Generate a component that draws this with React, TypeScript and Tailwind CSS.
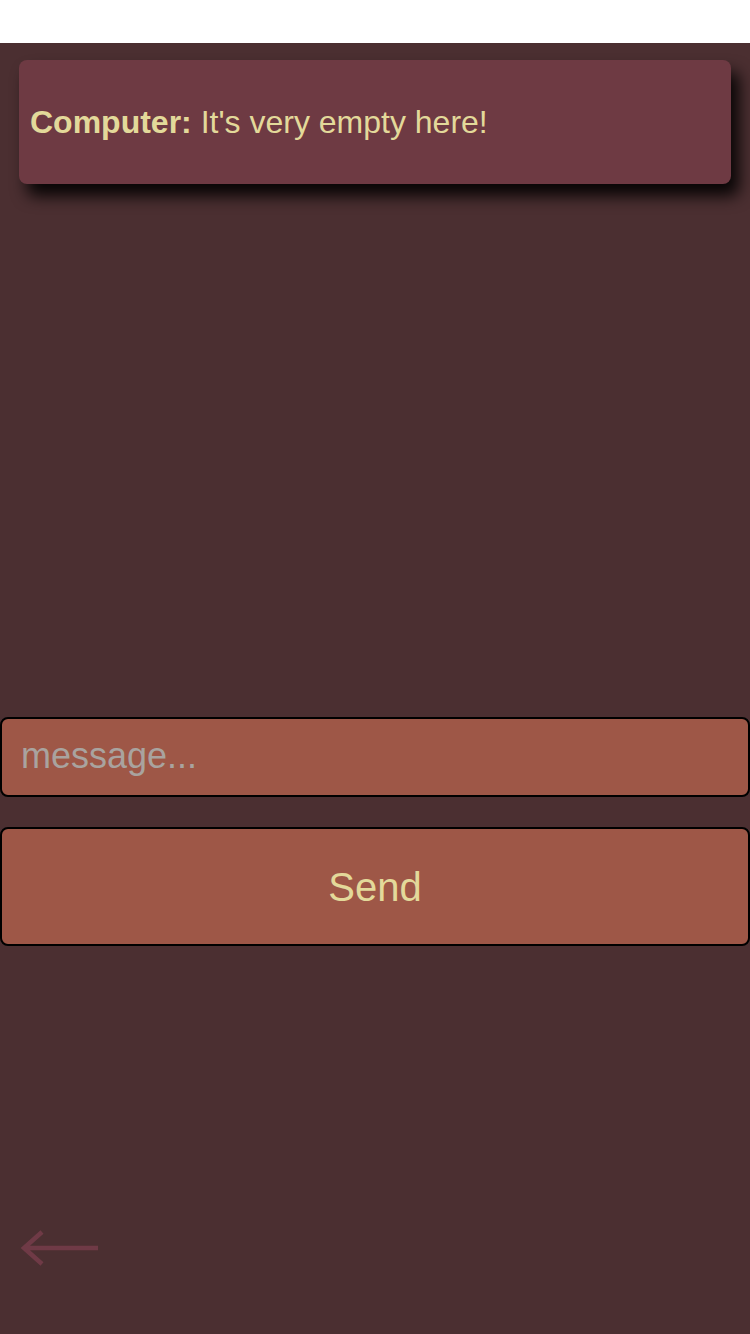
import React from 'react'

function BackArrow() {
    return (
        <svg width="80" height="36" viewBox="0 0 80 36" fill="none">
            <path d="M22 2 L4 18 L22 34 M4 18 H78" stroke="#6F3A46" strokeWidth="4.5" strokeLinecap="butt" strokeLinejoin="miter" />
        </svg>
    )
}

export default function App() {
    return (
        <div className='w-[750px] h-[1334px] flex flex-col bg-white font-["Liberation_Sans",Arial,sans-serif]'>
            <div className='h-[43px] shrink-0 bg-white'></div>
            <div className='flex-1 flex flex-col bg-[#4B2F31]'>
                <div className='h-[674px] pt-[17px] px-[19px]'>
                    <div className='h-[124px] flex items-center px-[11px] rounded-[8px] bg-[#6E3A43] shadow-[8px_12px_16px_rgba(0,0,0,0.9)]'>
                        <p className='text-[32px] leading-none text-[#E3D99A]'>
                            <span className='font-bold'>Computer:</span> It's very empty here!
                        </p>
                    </div>
                </div>
                <input
                    placeholder='message...'
                    className='h-[80px] w-full px-[19px] pb-[3px] rounded-[8px] border-2 border-black bg-[#9E5747] text-[36px] text-[#E3D99A] placeholder:text-[#A9A39F] outline-none'
                />
                <button className='mt-[30px] h-[119px] w-full rounded-[8px] border-2 border-black bg-[#9E5747] text-[40px] leading-none text-[#E3D99A]'>
                    Send
                </button>
                <div className='mt-[284px] pl-[20px]'>
                    <BackArrow />
                </div>
            </div>
        </div>
    )
}
